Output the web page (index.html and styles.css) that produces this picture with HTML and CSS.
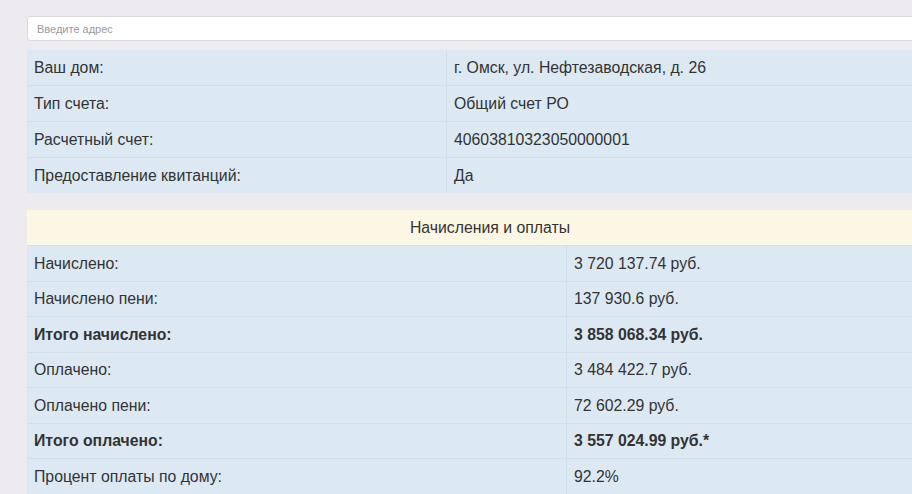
FILE: index.html
```html
<!DOCTYPE html>
<html lang="ru">
<head>
<meta charset="utf-8">
<title>Дом</title>
<link rel="stylesheet" href="styles.css">
</head>
<body>
<div class="page">
  <input class="address" type="text" placeholder="Введите адрес">
  <table class="info house">
    <tr><td class="label">Ваш дом:</td><td>г. Омск, ул. Нефтезаводская, д. 26</td></tr>
    <tr><td class="label">Тип счета:</td><td>Общий счет РО</td></tr>
    <tr><td class="label">Расчетный счет:</td><td>40603810323050000001</td></tr>
    <tr><td class="label">Предоставление квитанций:</td><td>Да</td></tr>
  </table>
  <table class="info pay">
    <tr class="head"><td colspan="2">Начисления и оплаты</td></tr>
    <tr><td class="label">Начислено:</td><td>3 720 137.74 руб.</td></tr>
    <tr><td class="label">Начислено пени:</td><td>137 930.6 руб.</td></tr>
    <tr class="total"><td class="label">Итого начислено:</td><td>3 858 068.34 руб.</td></tr>
    <tr><td class="label">Оплачено:</td><td>3 484 422.7 руб.</td></tr>
    <tr><td class="label">Оплачено пени:</td><td>72 602.29 руб.</td></tr>
    <tr class="total"><td class="label">Итого оплачено:</td><td>3 557 024.99 руб.*</td></tr>
    <tr><td class="label">Процент оплаты по дому:</td><td>92.2%</td></tr>
  </table>
</div>
</body>
</html>
```
FILE: styles.css
```css
html, body {
  margin: 0;
  padding: 0;
  background: #eeebf0;
  overflow: hidden;
}
body {
  font-family: "Liberation Sans", Arial, sans-serif;
  color: #333;
  font-size: 15.8px;
}
.page {
  padding: 16px 0 0 27px;
  width: 926px;
}
.address {
  display: block;
  box-sizing: border-box;
  width: 100%;
  height: 25px;
  margin: 0 0 9px 0;
  padding: 0 9px;
  border: 1px solid #dcd9de;
  border-radius: 3px;
  background: #fff;
  font-family: "Liberation Sans", Arial, sans-serif;
  font-size: 11px;
  color: #555;
  outline: none;
}
.address::placeholder {
  color: #9a9a9a;
}
.info {
  width: 100%;
  border-collapse: collapse;
  background: #dce9f3;
}
.info td {
  padding: 7.5px 7px 7px 7px;
  line-height: 20px;
  border-top: 1px solid #d0dfea;
  vertical-align: top;
}
.house td {
  padding-top: 8px;
}
.info tr:first-child td {
  border-top: none;
}
.info td + td {
  border-left: 1px solid #d0dfea;
}
.house .label { width: 405px; }
.pay .label { width: 525px; }
.house {
  margin-bottom: 17px;
}
.pay .head td {
  background: #fcf7e4;
  text-align: center;
  border-left: none;
  padding-top: 8px;
}
.pay .total td {
  font-weight: bold;
}
```
